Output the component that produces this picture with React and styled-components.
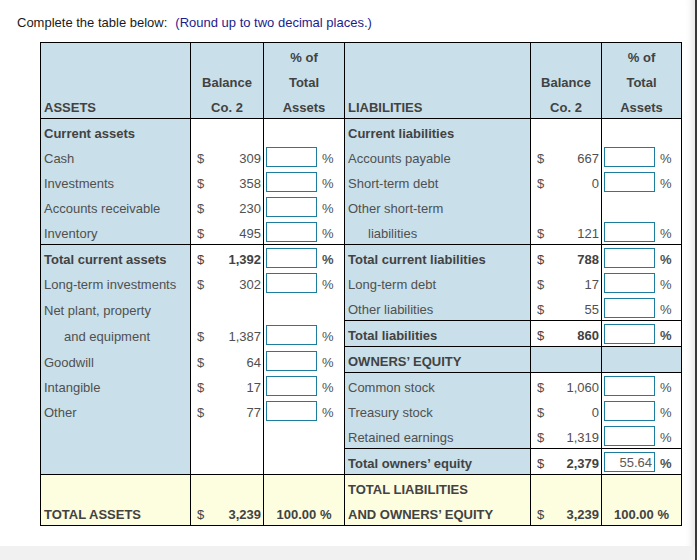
import styled, { createGlobalStyle } from "styled-components";

const GlobalStyle = createGlobalStyle`
  html, body {
    margin: 0;
    padding: 0;
    background: #fff;
  }
  body {
    font-family: "Liberation Sans", Arial, sans-serif;
  }
`;

const BLUE = "#c9dfe9";
const CREAM = "#fdfde0";

const left = [
  { label: "Current assets", bold: true },
  { label: "Cash", amt: "309", box: true },
  { label: "Investments", amt: "358", box: true },
  { label: "Accounts receivable", amt: "230", box: true },
  { label: "Inventory", amt: "495", box: true, bb: true },
  { label: "Total current assets", bold: true, amt: "1,392", box: true },
  { label: "Long-term investments", amt: "302", box: true },
  { label: "Net plant, property" },
  { label: "and equipment", indent: true, amt: "1,387", box: true },
  { label: "Goodwill", amt: "64", box: true },
  { label: "Intangible", amt: "17", box: true },
  { label: "Other", amt: "77", box: true },
  { label: "" },
  { label: "", bb: true },
];

const right = [
  { label: "Current liabilities", bold: true },
  { label: "Accounts payable", amt: "667", box: true },
  { label: "Short-term debt", amt: "0", box: true },
  { label: "Other short-term" },
  { label: "liabilities", indent: true, amt: "121", box: true, bb: true },
  { label: "Total current liabilities", bold: true, amt: "788", box: true },
  { label: "Long-term debt", amt: "17", box: true },
  { label: "Other liabilities", amt: "55", box: true, bb: true },
  { label: "Total liabilities", bold: true, amt: "860", box: true, bb: true },
  { label: "OWNERS’ EQUITY", bold: true, shaded: true, bb: true },
  { label: "Common stock", amt: "1,060", box: true },
  { label: "Treasury stock", amt: "0", box: true },
  { label: "Retained earnings", amt: "1,319", box: true, bb: true },
  {
    label: "Total owners’ equity",
    bold: true,
    amt: "2,379",
    box: true,
    value: "55.64",
    bb: true,
  },
];

const Frame = styled.div`
  width: 695px;
  height: 560px;
  display: flex;
  flex-direction: column;
  border-right: 2px solid #3a3a3a;
  box-shadow: inset -10px 0 8px -8px rgba(0, 0, 0, 0.12);
`;

const Content = styled.div`
  flex: 1;
  padding: 15px 0 0 17px;
`;

const Footer = styled.div`
  height: 14px;
  background: #f1f1f1;
`;

const Prompt = styled.p`
  margin: 0;
  font-size: 13px;
  line-height: 16px;
  color: #1a1a1a;

  span {
    margin-left: 8px;
    color: #1c1c8c;
  }
`;

const Sheet = styled.div`
  display: grid;
  grid-template-columns: 150px 73px 81px 186px 71px 80px;
  width: max-content;
  margin: 11px 0 0 23px;
  border-left: 1px solid #000;
  border-top: 1px solid #000;
  font-size: 13px;
  color: #505050;
`;

const Cell = styled.div`
  box-sizing: border-box;
  min-height: ${(p) => (p.$lines || 1) * 25 + (p.$bb ? 1 : 0)}px;
  display: flex;
  flex-direction: column;
  justify-content: flex-end;
  background: ${(p) => p.$bg || "#fff"};
  border-right: 1px solid #000;
  border-bottom: ${(p) => (p.$bb ? "1px solid #000" : "none")};
  font-weight: ${(p) => (p.$bold ? 700 : 400)};
  color: ${(p) => (p.$bold ? "#424242" : "#505050")};
`;

const Line = styled.div`
  height: 25px;
  display: flex;
  align-items: center;
  padding-top: 4px;
  box-sizing: border-box;
  white-space: nowrap;
  justify-content: ${(p) => p.$justify || "flex-start"};
  padding-left: ${(p) => p.$pl ?? 0}px;
  padding-right: ${(p) => p.$pr ?? 0}px;
`;

const Dollar = styled.span`
  font-weight: 400;
`;

const Entry = styled.input`
  box-sizing: border-box;
  width: 51px;
  height: 20px;
  margin: -3px 0 0 0;
  padding: 0 2px 0 0;
  border: 1px solid #1e7c9e;
  background: #fff;
  font-family: "Liberation Sans", Arial, sans-serif;
  font-size: 13px;
  color: #5a5a5a;
  text-align: right;
  outline: none;
`;

const Sign = styled.span`
  margin-left: 5px;
  font-weight: ${(p) => (p.$bold ? 700 : 400)};
`;

const Side = ({ row }) => {
  const bg = row.shaded ? BLUE : "#fff";
  return (
    <>
      <Cell $bg={BLUE} $bb={row.bb} $bold={row.bold}>
        <Line $pl={row.indent ? 23 : 3}>{row.label}</Line>
      </Cell>
      <Cell $bg={bg} $bb={row.bb} $bold={row.bold}>
        {row.amt && (
          <Line $justify="space-between" $pl={6} $pr={2}>
            <Dollar>$</Dollar>
            <span>{row.amt}</span>
          </Line>
        )}
      </Cell>
      <Cell $bg={bg} $bb={row.bb}>
        {row.box && (
          <Line $pl={2}>
            <Entry
              readOnly
              defaultValue={row.value || ""}
              aria-label={`${row.label} percent`}
            />
            <Sign $bold={row.bold}>%</Sign>
          </Line>
        )}
      </Cell>
    </>
  );
};

const Row = ({ l, r }) => (
  <>
    <Side row={l} />
    <Side row={r} />
  </>
);

const HeadGroup = ({ title }) => (
  <>
    <Cell $bg={BLUE} $bb $lines={3} $bold>
      <Line $pl={3}>{title}</Line>
    </Cell>
    <Cell $bg={BLUE} $bb $lines={3} $bold>
      <Line $justify="center">Balance</Line>
      <Line $justify="center">Co. 2</Line>
    </Cell>
    <Cell $bg={BLUE} $bb $lines={3} $bold>
      <Line $justify="center">% of</Line>
      <Line $justify="center">Total</Line>
      <Line $justify="center">Assets</Line>
    </Cell>
  </>
);

const TotalGroup = ({ lines }) => (
  <>
    <Cell $bg={CREAM} $bb $lines={2} $bold>
      {lines.map((t) => (
        <Line key={t} $pl={3}>
          {t}
        </Line>
      ))}
    </Cell>
    <Cell $bg={CREAM} $bb $lines={2} $bold>
      <Line $justify="space-between" $pl={6} $pr={2}>
        <Dollar>$</Dollar>
        <span>3,239</span>
      </Line>
    </Cell>
    <Cell $bg={CREAM} $bb $lines={2} $bold>
      <Line $justify="center">100.00 %</Line>
    </Cell>
  </>
);

export default function App() {
  return (
    <>
      <GlobalStyle />
      <Frame>
        <Content>
          <Prompt>
            Complete the table below:
            <span>(Round up to two decimal places.)</span>
          </Prompt>
          <Sheet>
            <HeadGroup title="ASSETS" />
            <HeadGroup title="LIABILITIES" />
            {left.map((row, i) => (
              <Row key={i} l={row} r={right[i]} />
            ))}
            <TotalGroup lines={["TOTAL ASSETS"]} />
            <TotalGroup lines={["TOTAL LIABILITIES", "AND OWNERS’ EQUITY"]} />
          </Sheet>
        </Content>
        <Footer />
      </Frame>
    </>
  );
}
